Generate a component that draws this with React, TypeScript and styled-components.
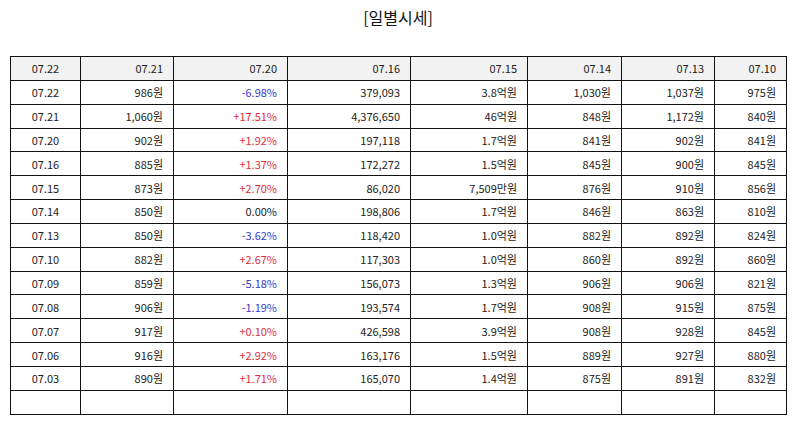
import React from 'react';
import styled, { createGlobalStyle } from 'styled-components';

const GlobalStyle = createGlobalStyle`
  html, body {
    margin: 0;
    padding: 0;
    background: #fff;
  }
  body {
    font-family: "Noto Sans CJK KR", "Noto Sans", sans-serif;
    color: #222;
  }
`;

const Page = styled.div`
  width: 794px;
  padding: 0 8px 0 10px;
  box-sizing: border-box;
`;

const Title = styled.h2`
  margin: 0;
  height: 56px;
  padding-top: 5px;
  box-sizing: border-box;
  font-size: 16px;
  font-weight: normal;
  text-align: center;
  color: #111;
  line-height: 24px;
`;

const Table = styled.table`
  width: 776px;
  border-collapse: collapse;
  table-layout: fixed;
  font-size: 11px;
`;

const Cell = styled.td<{ $head?: boolean; $center?: boolean; $tone?: 'up' | 'down' }>`
  height: 23.85px;
  padding: 0 10px 0 4px;
  border: 1px solid #111;
  box-sizing: border-box;
  background: ${p => (p.$head ? '#f2f2f2' : '#fff')};
  text-align: ${p => (p.$center ? 'center' : 'right')};
  ${p => p.$center && 'padding: 0 4px;'}
  color: ${p => (p.$tone === 'up' ? '#e0303a' : p.$tone === 'down' ? '#3a3acc' : '#222')};
  font-weight: normal;
  white-space: nowrap;
  line-height: 14px;
`;

const widths = [70, 93, 114, 123, 117, 94, 93, 72];
const header = ['07.22', '07.21', '07.20', '07.16', '07.15', '07.14', '07.13', '07.10'];

const rows: string[][] = [
  ['07.22', '986원', '-6.98%', '379,093', '3.8억원', '1,030원', '1,037원', '975원'],
  ['07.21', '1,060원', '+17.51%', '4,376,650', '46억원', '848원', '1,172원', '840원'],
  ['07.20', '902원', '+1.92%', '197,118', '1.7억원', '841원', '902원', '841원'],
  ['07.16', '885원', '+1.37%', '172,272', '1.5억원', '845원', '900원', '845원'],
  ['07.15', '873원', '+2.70%', '86,020', '7,509만원', '876원', '910원', '856원'],
  ['07.14', '850원', '0.00%', '198,806', '1.7억원', '846원', '863원', '810원'],
  ['07.13', '850원', '-3.62%', '118,420', '1.0억원', '882원', '892원', '824원'],
  ['07.10', '882원', '+2.67%', '117,303', '1.0억원', '860원', '892원', '860원'],
  ['07.09', '859원', '-5.18%', '156,073', '1.3억원', '906원', '906원', '821원'],
  ['07.08', '906원', '-1.19%', '193,574', '1.7억원', '908원', '915원', '875원'],
  ['07.07', '917원', '+0.10%', '426,598', '3.9억원', '908원', '928원', '845원'],
  ['07.06', '916원', '+2.92%', '163,176', '1.5억원', '889원', '927원', '880원'],
  ['07.03', '890원', '+1.71%', '165,070', '1.4억원', '875원', '891원', '832원'],
  ['', '', '', '', '', '', '', ''],
];

const toneOf = (value: string) =>
  value.startsWith('+') ? 'up' : value.startsWith('-') ? 'down' : undefined;

export default function App() {
  return (
    <Page>
      <GlobalStyle />
      <Title>[일별시세]</Title>
      <Table>
        <colgroup>
          {widths.map((w, i) => (
            <col key={i} style={{ width: w }} />
          ))}
        </colgroup>
        <thead>
          <tr>
            {header.map((h, i) => (
              <Cell as="th" key={i} $head $center={i === 0}>
                {h}
              </Cell>
            ))}
          </tr>
        </thead>
        <tbody>
          {rows.map((row, r) => (
            <tr key={r}>
              {row.map((v, i) => (
                <Cell key={i} $center={i === 0} $tone={i === 2 ? toneOf(v) : undefined}>
                  {v}
                </Cell>
              ))}
            </tr>
          ))}
        </tbody>
      </Table>
    </Page>
  );
}
